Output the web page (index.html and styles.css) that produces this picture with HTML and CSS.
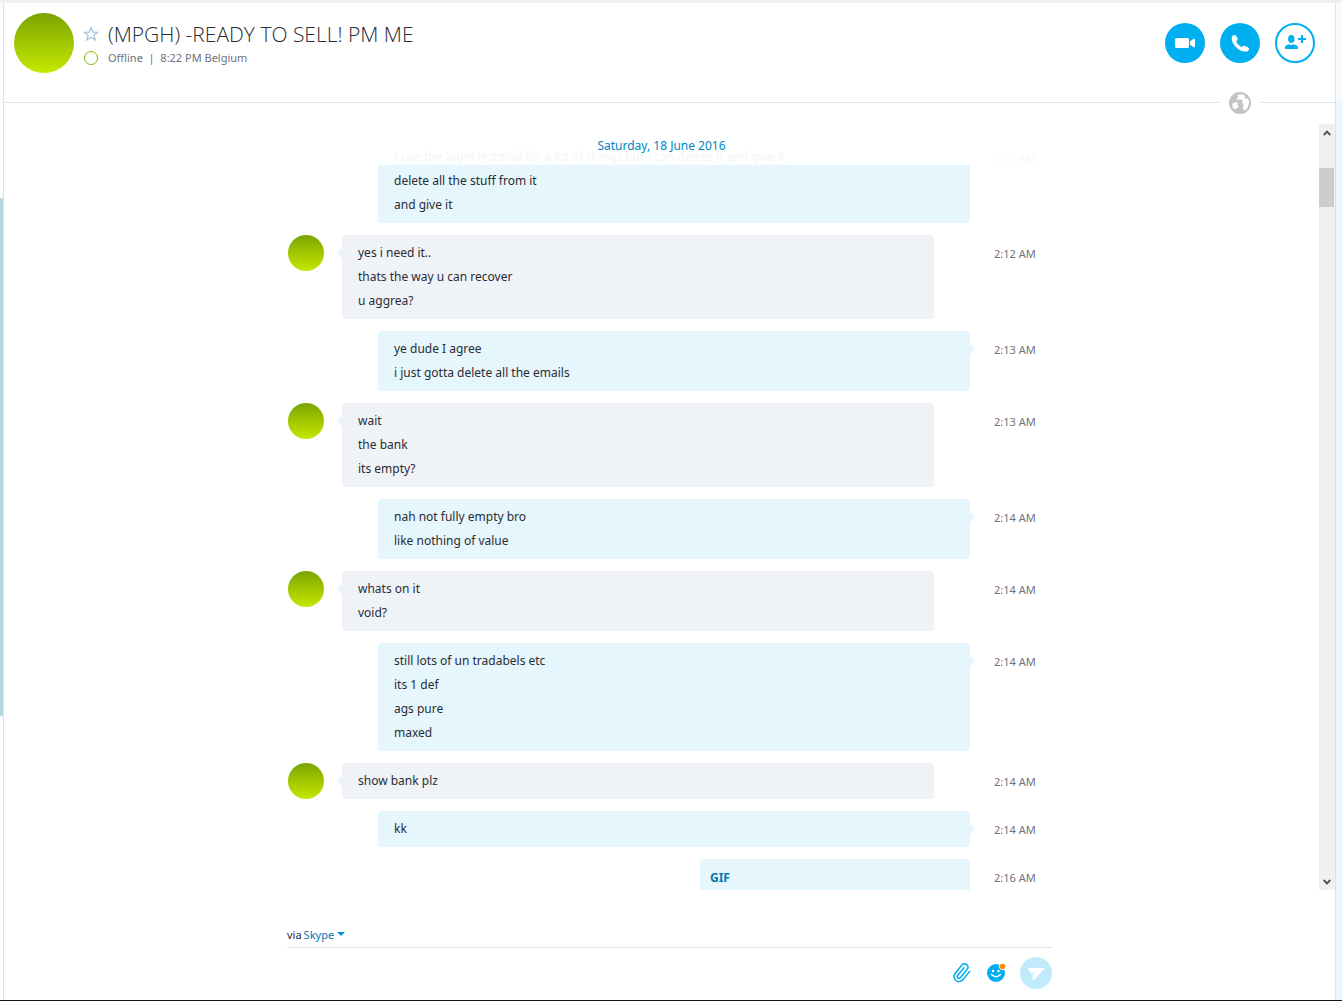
FILE: index.html
```html
<!DOCTYPE html>
<html lang="en">
<head>
    <meta charset="UTF-8">
    <meta name="viewport" content="width=device-width, initial-scale=1.0">
    <title>(MPGH) -READY TO SELL! PM ME</title>
    <link rel="stylesheet" href="styles.css">
</head>
<body>
    <div class="window">
        <div class="rail-left"></div>
        <main class="chat">
            <header class="header">
                <div class="avatar avatar-large"></div>
                <div class="contact">
                    <div class="contact-row">
                        <button type="button" class="icon-button" aria-label="Add to favourites">
                            <svg width="16" height="16" viewBox="0 0 16 16"><path d="M8 1.6l1.8 4.5 4.9.2-3.8 3 1.3 4.6L8 11.3l-4.2 2.6 1.3-4.6-3.8-3 4.9-.2z" fill="none" stroke="#a5c8da" stroke-width="1.3"/></svg>
                        </button>
                        <h1>(MPGH) -READY TO SELL! PM ME</h1>
                    </div>
                    <div class="contact-row">
                        <span class="status-dot"></span>
                        <p class="status">Offline&nbsp; |&nbsp; 8:22 PM Belgium</p>
                    </div>
                </div>
                <div class="actions">
                    <button type="button" class="round-button" aria-label="Video call">
                        <svg width="40" height="40" viewBox="0 0 40 40" fill="#fff"><rect x="10" y="15" width="14" height="10" rx="1.5"/><path d="M25 18.5l3.6-2.7q1.4-.5 1.4.6v7.2q0 1.1-1.4.6L25 21.5z"/></svg>
                    </button>
                    <button type="button" class="round-button" aria-label="Call">
                        <svg width="40" height="40" viewBox="0 0 40 40" fill="#fff"><path d="M12.6 12.7q1.8-1.4 3.4-.2l1.7 3.3q.3 1.2-1.3 2.2-.2 1.4 2 3.8 2.3 2.3 3.9 2.1.9-1.5 2.2-1.2l3.5 1.6q1.6 1 .8 2.6-.9 2-3.8 1.7-5.4-.6-9.2-4.7-4-4.3-4.1-8.4-.1-1.7.9-2.8z"/></svg>
                    </button>
                    <button type="button" class="round-button outline" aria-label="Add people">
                        <svg width="36" height="36" viewBox="2 2 36 36" fill="#00aff0"><ellipse cx="16.3" cy="16" rx="3.2" ry="3.9"/><path d="M10 26v-2q.2-1.2 1.5-1.7l2.5-1.1q2.3 1.5 4.6 0l2.500 1.100q1.600.5 1.900 1.700v2z"/><path d="M26 12h2v3h3v2h-3v3h-2v-3h-3v-2h3z"/></svg>
                    </button>
                </div>
            </header>
            <div class="divider">
                <span class="divider-line"></span>
                <svg class="globe" width="22" height="22" viewBox="0 0 22 22"><circle cx="11" cy="11" r="11" fill="#c3c3c6"/><path d="M8 3.200Q11 1.700 14 2.600l2.500 1.400-1 1.800 1.500.9 2.300-.2q1.500 4 .1 7.500-1.300 3.300-4.400 4.800l-1.200-3 .9-3-1.800-2.600 1-2-3.600-.9-2.300.9L7.500 7l1.800-1.800z" fill="#fff"/><path d="M3.600 11.400l3.200-1.700 1.700 1.200v2.600l1.300 1.200-2.300 2.100-3 .2Q2.500 14.500 3.600 11.400z" fill="#fff"/></svg>
                <span class="divider-line short"></span>
            </div>
            <section class="conversation">
                <div class="date-bar">Saturday, 18 June 2016</div>
                <div class="scroll-area">
                    <div class="messages">
                        <article class="message mine">
                            <div class="bubble">
                                <p>I use the login Hotmail for a lot of things but I can delete it and give it</p>
                                <p>delete all the stuff from it</p>
                                <p>and give it</p>
                            </div>
                            <time>2:12 AM</time>
                        </article>
                        <article class="message">
                            <div class="avatar"></div>
                            <div class="bubble">
                                <p>yes i need it..</p>
                                <p>thats the way u can recover</p>
                                <p>u aggrea?</p>
                            </div>
                            <time>2:12 AM</time>
                        </article>
                        <article class="message mine">
                            <div class="bubble">
                                <p>ye dude I agree</p>
                                <p>i just gotta delete all the emails</p>
                            </div>
                            <time>2:13 AM</time>
                        </article>
                        <article class="message">
                            <div class="avatar"></div>
                            <div class="bubble">
                                <p>wait</p>
                                <p>the bank</p>
                                <p>its empty?</p>
                            </div>
                            <time>2:13 AM</time>
                        </article>
                        <article class="message mine">
                            <div class="bubble">
                                <p>nah not fully empty bro</p>
                                <p>like nothing of value</p>
                            </div>
                            <time>2:14 AM</time>
                        </article>
                        <article class="message">
                            <div class="avatar"></div>
                            <div class="bubble">
                                <p>whats on it</p>
                                <p>void?</p>
                            </div>
                            <time>2:14 AM</time>
                        </article>
                        <article class="message mine">
                            <div class="bubble">
                                <p>still lots of un tradabels etc</p>
                                <p>its 1 def</p>
                                <p>ags pure</p>
                                <p>maxed</p>
                            </div>
                            <time>2:14 AM</time>
                        </article>
                        <article class="message">
                            <div class="avatar"></div>
                            <div class="bubble">
                                <p>show bank plz</p>
                            </div>
                            <time>2:14 AM</time>
                        </article>
                        <article class="message mine">
                            <div class="bubble">
                                <p>kk</p>
                            </div>
                            <time>2:14 AM</time>
                        </article>
                        <article class="message mine">
                            <div class="bubble media">
                                <a href="#">GIF</a>
                            </div>
                            <time>2:16 AM</time>
                        </article>
                    </div>
                </div>
                <div class="scrollbar">
                    <button type="button" class="scroll-button" aria-label="Scroll up">
                        <svg width="8" height="6" viewBox="0 0 8 6"><path d="M.7 5L4 1.7 7.3 5" fill="none" stroke="#505050" stroke-width="1.9"/></svg>
                    </button>
                    <div class="scroll-track">
                        <div class="scroll-thumb"></div>
                    </div>
                    <button type="button" class="scroll-button" aria-label="Scroll down">
                        <svg width="8" height="6" viewBox="0 0 8 6"><path d="M.7 1L4 4.3 7.3 1" fill="none" stroke="#505050" stroke-width="1.9"/></svg>
                    </button>
                </div>
            </section>
            <form class="composer">
                <div class="via">
                    <label for="via">via</label>
                    <select id="via" name="via">
                        <option>Skype</option>
                    </select>
                    <svg width="8" height="4" viewBox="0 0 8 4"><path d="M0 0h8L4 4z" fill="#0095cc"/></svg>
                </div>
                <div class="composer-row">
                    <input type="text" class="composer-input" aria-label="Type a message here">
                    <button type="button" class="icon-button" aria-label="Attach file">
                        <svg width="20" height="20" viewBox="0 0 24 24"><path transform="rotate(-6 12 12)" d="M21.4 11l-9.2 9.200a6 6 0 0 1-8.500-8.500l9.200-9.200a4 4 0 0 1 5.700 5.700l-9.200 9.200a2 2 0 0 1-2.900-2.900l8.500-8.500" fill="none" stroke="#00aff0" stroke-width="1.800" stroke-linecap="round"/></svg>
                    </button>
                    <button type="button" class="icon-button" aria-label="Emoticons">
                        <svg width="20" height="20" viewBox="0 0 20 20"><circle cx="10" cy="10" r="9" fill="#00aff0"/><circle cx="7" cy="8" r="1.2" fill="#fff"/><circle cx="12.5" cy="8" r="1.2" fill="#fff"/><path d="M5.500 11.500q4.500 4.500 9 0" fill="none" stroke="#fff" stroke-width="1.4" stroke-linecap="round"/><circle cx="16.500" cy="3.500" r="3.400" fill="#fff"/><circle cx="16.500" cy="3.500" r="2.700" fill="#ff8c00"/></svg>
                    </button>
                    <button type="submit" class="send-button" aria-label="Send">
                        <svg width="32" height="32" viewBox="0 0 32 32"><path d="M8 11h17L14 23l-1.500-.5v-5.500l4.500-2-5.500 1-2-1z" fill="#fff"/></svg>
                    </button>
                </div>
            </form>
        </main>
        <div class="rail-right"></div>
    </div>
</body>
</html>
```

FILE: styles.css
```css
* {
    box-sizing: border-box;
}
body {
    margin: 0;
    font-family: "Noto Sans", "Open Sans", sans-serif;
    font-size: 12px;
    color: #2b2c33;
    background: #fff;
}
h1, p {
    margin: 0;
}
button {
    padding: 0;
    border: none;
    background: none;
    cursor: pointer;
}
svg {
    display: block;
}
.window {
    display: flex;
    height: 100vh;
    border-top: 3px solid #f0f0f0;
    border-bottom: 1px solid #14141c;
}
.rail-left {
    width: 4px;
    border-right: 1px solid #dae3ea;
    background: linear-gradient(#fafcfe 195px, #b9d7e3 195px, #b9d7e3 713px, #fafcfe 713px);
}
.rail-right {
    width: 7px;
    border-left: 1px solid #d5e4ef;
    background: linear-gradient(#f5fafd 99px, #eaf6fd 99px);
}
.chat {
    flex: 1;
    min-width: 0;
    display: flex;
    flex-direction: column;
}

/* header */
.header {
    display: flex;
    height: 89px;
    padding: 10px 20px 0 10px;
}
.avatar {
    width: 36px;
    height: 36px;
    border-radius: 50%;
    background: linear-gradient(#7ba400, #c6e800);
}
.avatar-large {
    width: 60px;
    height: 60px;
}
.contact {
    flex: 1;
    padding: 6px 0 0 8px;
}
.contact-row {
    display: flex;
    align-items: center;
    gap: 8px;
}
.contact-row .icon-button,
.status-dot {
    flex: none;
    width: 18px;
}
.icon-button svg {
    margin: auto;
}
h1 {
    font-family: "Open Sans", "Noto Sans", sans-serif;
    font-size: 21px;
    line-height: 30px;
    font-weight: 300;
}
.status-dot::before {
    content: "";
    display: block;
    width: 12px;
    height: 12px;
    margin: auto;
    border: 1px solid #7fba00;
    border-radius: 50%;
}
.status {
    font-size: 11px;
    line-height: 18px;
    color: #6e7180;
}
.actions {
    display: flex;
    gap: 15px;
    padding-top: 10px;
}
.round-button {
    width: 40px;
    height: 40px;
    border-radius: 50%;
    background: #00aff0;
}
.round-button.outline {
    border: 2px solid #00aff0;
    background: #fff;
}
.divider {
    display: flex;
    align-items: center;
    margin-bottom: 10px;
}
.divider-line {
    flex: 1;
    height: 2px;
    border-top: 1px solid #d5e4ef;
}
.divider-line.short {
    flex: none;
    width: 75px;
}
.globe {
    margin: 0 9px;
}

/* conversation */
.conversation {
    position: relative;
    flex: 1;
    min-height: 0;
    display: flex;
}
.date-bar {
    position: absolute;
    z-index: 1;
    top: 0;
    left: 0;
    right: 16px;
    height: 41px;
    padding-top: 12px;
    line-height: 20px;
    text-align: center;
    color: #0087c2;
    background: rgba(255, 255, 255, 0.95);
}
.scroll-area {
    flex: 1;
    overflow: hidden;
}
.messages {
    display: flex;
    flex-direction: column;
    gap: 12px;
    max-width: 747px;
    margin: 0 auto;
    padding-top: 15px;
}
.message {
    display: flex;
    align-items: flex-start;
}
.bubble {
    position: relative;
    flex: 1;
    margin: 0 60px 0 18px;
    padding: 6px 16px;
    border-radius: 4px;
    background: #eff3f8;
}
.mine .bubble {
    margin: 0 24px 0 90px;
    background: #e5f6fd;
}
.bubble::before {
    content: "";
    position: absolute;
    top: 12px;
    left: -5px;
    border: solid transparent;
    border-width: 6px 5px 6px 0;
    border-right-color: #eff3f8;
}
.mine .bubble::before {
    left: auto;
    right: -5px;
    border-width: 6px 0 6px 5px;
    border-left-color: #e5f6fd;
}
.bubble p {
    line-height: 24px;
}
.mine .bubble.media {
    flex: none;
    width: 270px;
    height: 180px;
    margin-left: auto;
    padding: 7px 10px;
}
.bubble.media::before {
    content: none;
}
.bubble a {
    line-height: 24px;
    font-weight: 700;
    color: #0078b0;
    text-decoration: none;
}
.message time {
    flex: none;
    width: 41px;
    height: 36px;
    font-size: 11px;
    line-height: 38px;
    white-space: nowrap;
    color: #6e7180;
}
.scrollbar {
    display: flex;
    flex-direction: column;
    width: 16px;
    background: #f0f0f0;
}
.scroll-button {
    display: flex;
    align-items: center;
    justify-content: center;
    height: 17px;
}
.scroll-track {
    flex: 1;
    padding: 27px 1px 0 0;
}
.scroll-thumb {
    height: 39px;
    background: #cdcdcd;
}

/* composer */
.composer {
    width: 100%;
    max-width: 765px;
    height: 110px;
    margin: 0 auto;
    padding-top: 35px;
}
.via {
    display: flex;
    align-items: center;
    height: 23px;
    padding-bottom: 4px;
    border-bottom: 1px solid #d5e4ef;
    font-size: 11px;
}
.via select {
    appearance: none;
    margin: 0 2px;
    padding: 0;
    border: none;
    background: none;
    font: inherit;
    color: #0078b0;
}
.composer-row {
    display: flex;
    align-items: center;
    gap: 14px;
    padding-top: 9px;
}
.composer-input {
    flex: 1;
    height: 32px;
    border: none;
    outline: none;
    font: inherit;
}
.send-button {
    border-radius: 50%;
    background: #bfebfb;
}
```
